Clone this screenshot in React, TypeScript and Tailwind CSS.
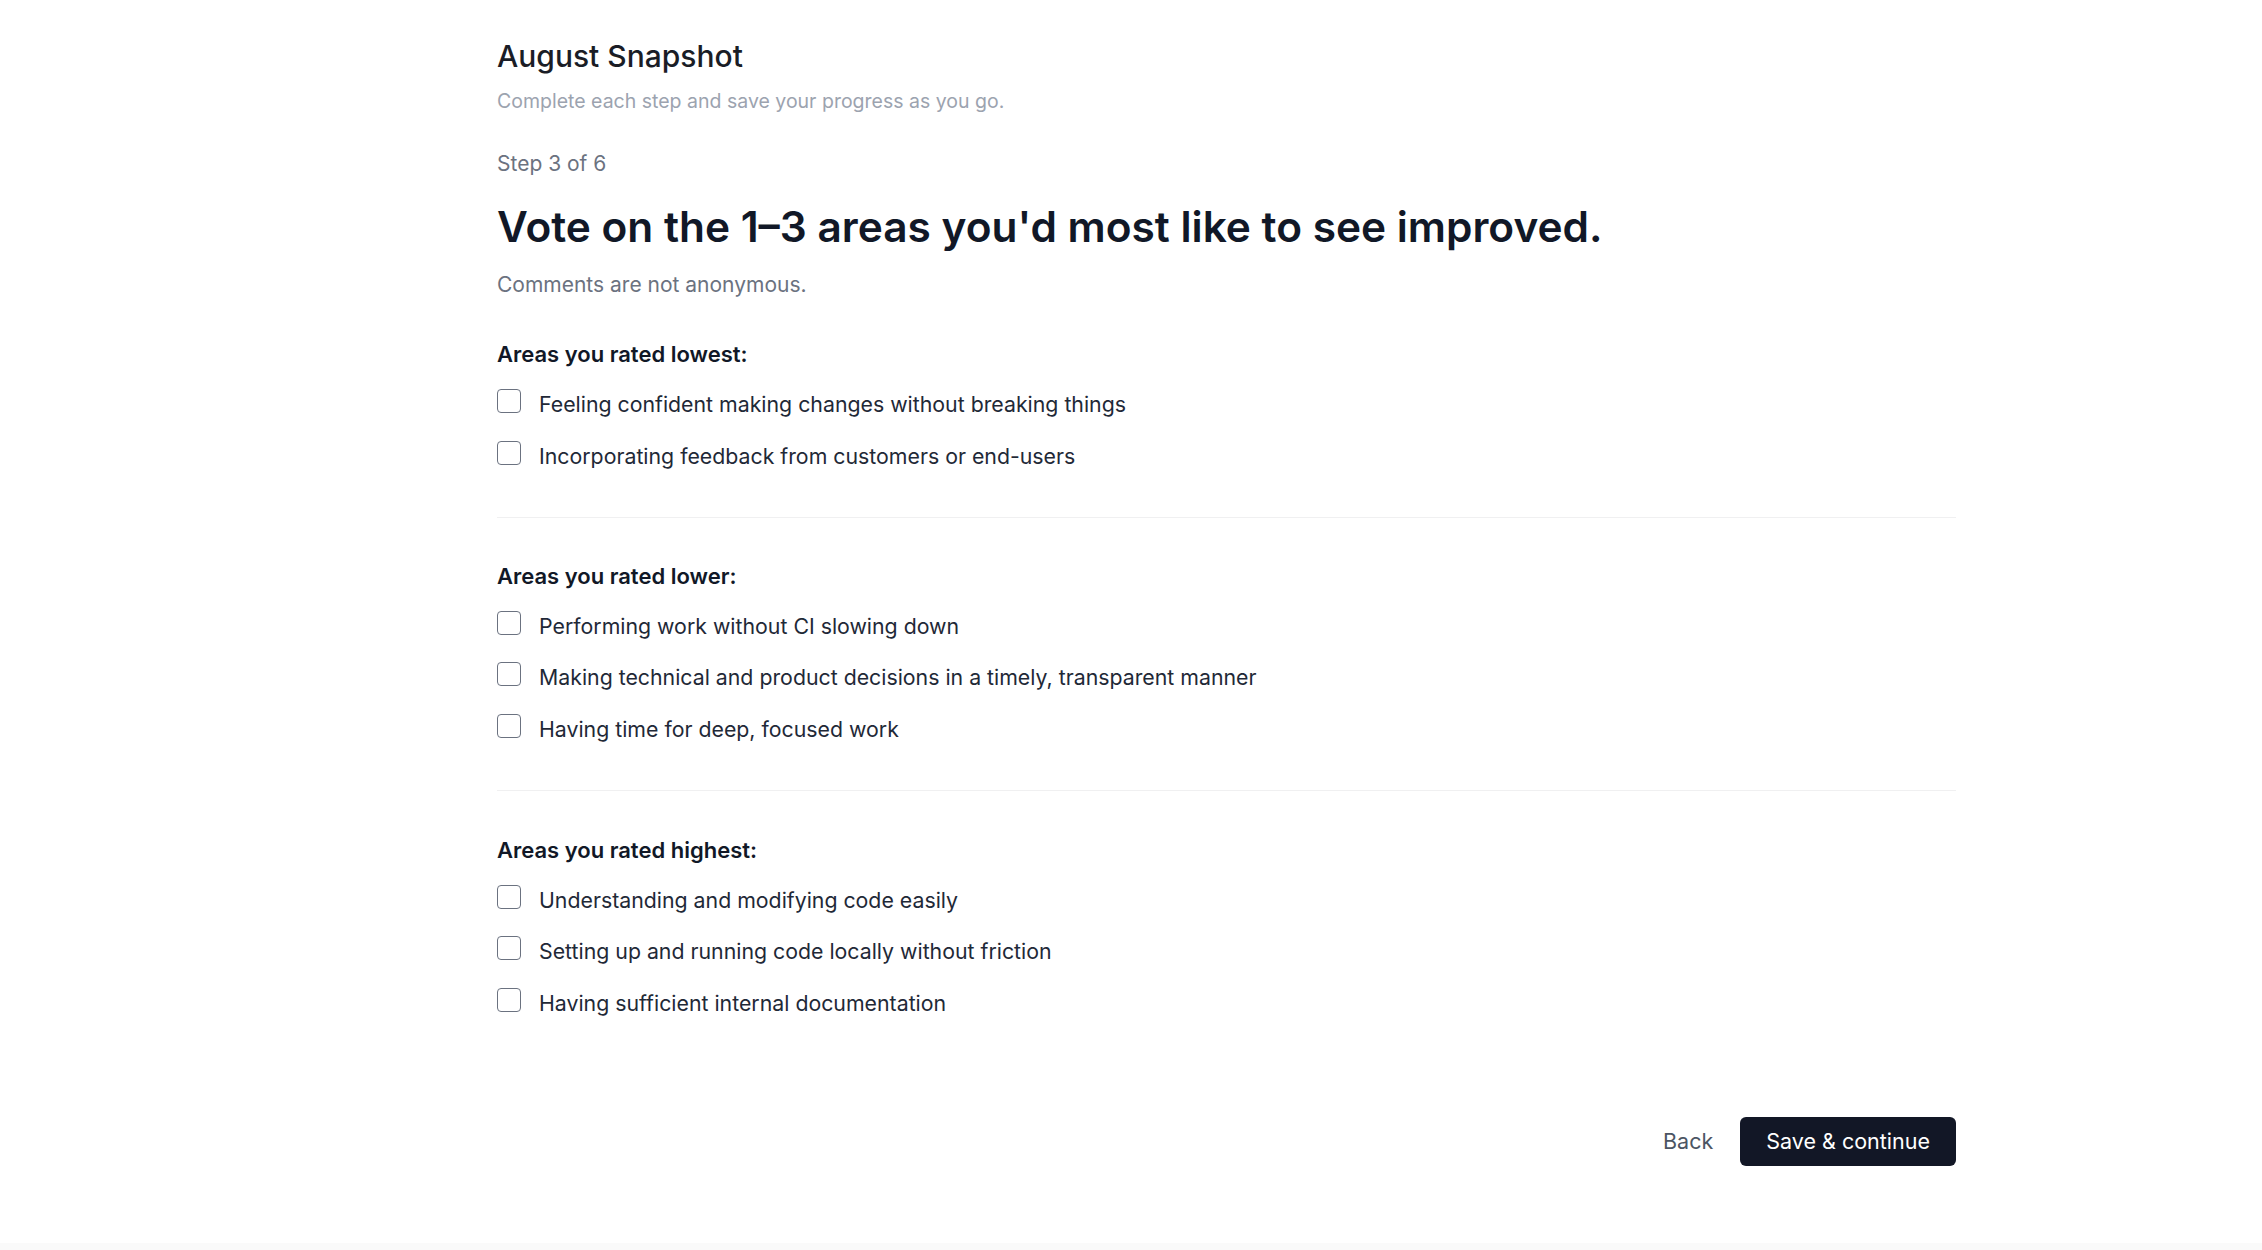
import { useState } from 'react';

const sections = [
  {
    title: 'Areas you rated lowest:',
    items: [
      'Feeling confident making changes without breaking things',
      'Incorporating feedback from customers or end-users',
    ],
  },
  {
    title: 'Areas you rated lower:',
    items: [
      'Performing work without CI slowing down',
      'Making technical and product decisions in a timely, transparent manner',
      'Having time for deep, focused work',
    ],
  },
  {
    title: 'Areas you rated highest:',
    items: [
      'Understanding and modifying code easily',
      'Setting up and running code locally without friction',
      'Having sufficient internal documentation',
    ],
  },
];

export default function App() {
  const [checked, setChecked] = useState<Record<string, boolean>>({});

  const toggle = (key: string) => setChecked((c) => ({ ...c, [key]: !c[key] }));

  return (
    <div className="bg-white font-['Inter','Liberation_Sans',sans-serif]">
      <main className="h-[1243px] pl-[497px] pr-[306px] pt-[38px]">
        {/* Header */}
        <h2 className="text-[30px] leading-[36px] font-medium text-[#1a1d26]">August Snapshot</h2>
        <p className="mt-[13px] text-[19.5px] leading-[28px] text-[#9ca3af]">
          Complete each step and save your progress as you go.
        </p>

        <p className="mt-[35px] text-[21px] leading-[28px] text-[#6b7280]">Step 3 of 6</p>
        <h1 className="mt-[23px] text-[42.4px] leading-[52px] font-semibold text-[#111827]">
          Vote on the 1–3 areas you'd most like to see improved.
        </h1>
        <p className="mt-[18px] text-[21px] leading-[28px] text-[#6b7280]">Comments are not anonymous.</p>

        {/* Sections */}
        <div className="mt-[40px]">
          {sections.map((s, si) => (
            <div key={s.title}>
              {si > 0 && (
                <div className={`${si === 1 ? 'mt-[48px] mb-[43px]' : 'mt-[48px] mb-[44px]'} h-px bg-[#f0f0f1]`} />
              )}
              <h3 className="text-[22px] leading-[30px] font-semibold text-[#111827]">{s.title}</h3>
              <div className="mt-[20px] flex flex-col gap-[23.5px]">
                {s.items.map((item) => {
                  const key = s.title + item;
                  return (
                    <label key={item} className="flex items-start gap-[18px] cursor-pointer">
                      <input
                        type="checkbox"
                        checked={!!checked[key]}
                        onChange={() => toggle(key)}
                        className="appearance-none m-0 w-[24px] h-[24px] shrink-0 rounded-[4px] border-[1.5px] border-[#6b7280] bg-white checked:bg-[#111827] checked:border-[#111827]"
                      />
                      <span className="mt-[2px] text-[21.3px] leading-[26px] text-[#1f2937]">{item}</span>
                    </label>
                  );
                })}
              </div>
            </div>
          ))}
        </div>

        {/* Actions */}
        <div className="mt-[101px] flex items-center justify-end gap-[27px]">
          <button type="button" className="text-[21.5px] text-[#4b5563]">
            Back
          </button>
          <button
            type="button"
            className="h-[49px] px-[26px] rounded-[6px] bg-[#121726] text-[21.5px] text-white"
          >
            Save &amp; continue
          </button>
        </div>
      </main>
      <div className="h-[7px] bg-[#fafafa]" />
    </div>
  );
}
